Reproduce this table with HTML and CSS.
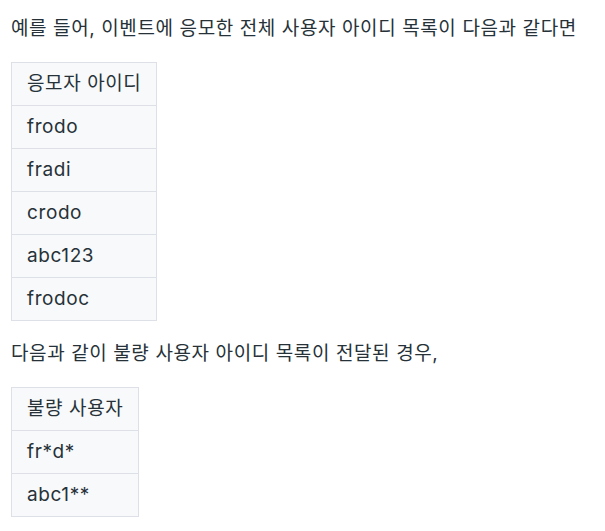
FILE: index.html
```html
<!DOCTYPE html>
<html lang="ko">
<head>
<meta charset="utf-8">
<link rel="stylesheet" href="styles.css">
</head>
<body>
<div class="content">
  <p class="para first">예를 들어, 이벤트에 응모한 전체 사용자 아이디 목록이 다음과 같다면</p>
  <table class="tbl">
    <thead><tr><th>응모자 아이디</th></tr></thead>
    <tbody>
      <tr><td>frodo</td></tr>
      <tr><td>fradi</td></tr>
      <tr><td>crodo</td></tr>
      <tr><td>abc123</td></tr>
      <tr><td>frodoc</td></tr>
    </tbody>
  </table>
  <p class="para second">다음과 같이 불량 사용자 아이디 목록이 전달된 경우,</p>
  <table class="tbl">
    <thead><tr><th>불량 사용자</th></tr></thead>
    <tbody>
      <tr><td>fr*d*</td></tr>
      <tr><td>abc1**</td></tr>
    </tbody>
  </table>
</div>
</body>
</html>
```
FILE: styles.css
```css
html, body {
  margin: 0;
  padding: 0;
  background: #ffffff;
}
.content {
  padding: 0 11px;
  font-family: "Inter", "Noto Sans CJK KR", sans-serif;
  font-size: 19px;
  color: #263238;
}
.para {
  margin: 0;
  line-height: 28px;
  letter-spacing: 0.6px;
}
.first {
  padding-top: 15px;
  padding-bottom: 19px;
}
.second {
  padding-top: 19px;
  padding-bottom: 19px;
}
.tbl {
  border-collapse: collapse;
}
.tbl th, .tbl td {
  border: 1px solid #dde0e6;
  background: #f8f9fb;
  padding: 0 15px;
  height: 42px;
  text-align: left;
  font-weight: 400;
  line-height: 26px;
  letter-spacing: 0.6px;
}
```
